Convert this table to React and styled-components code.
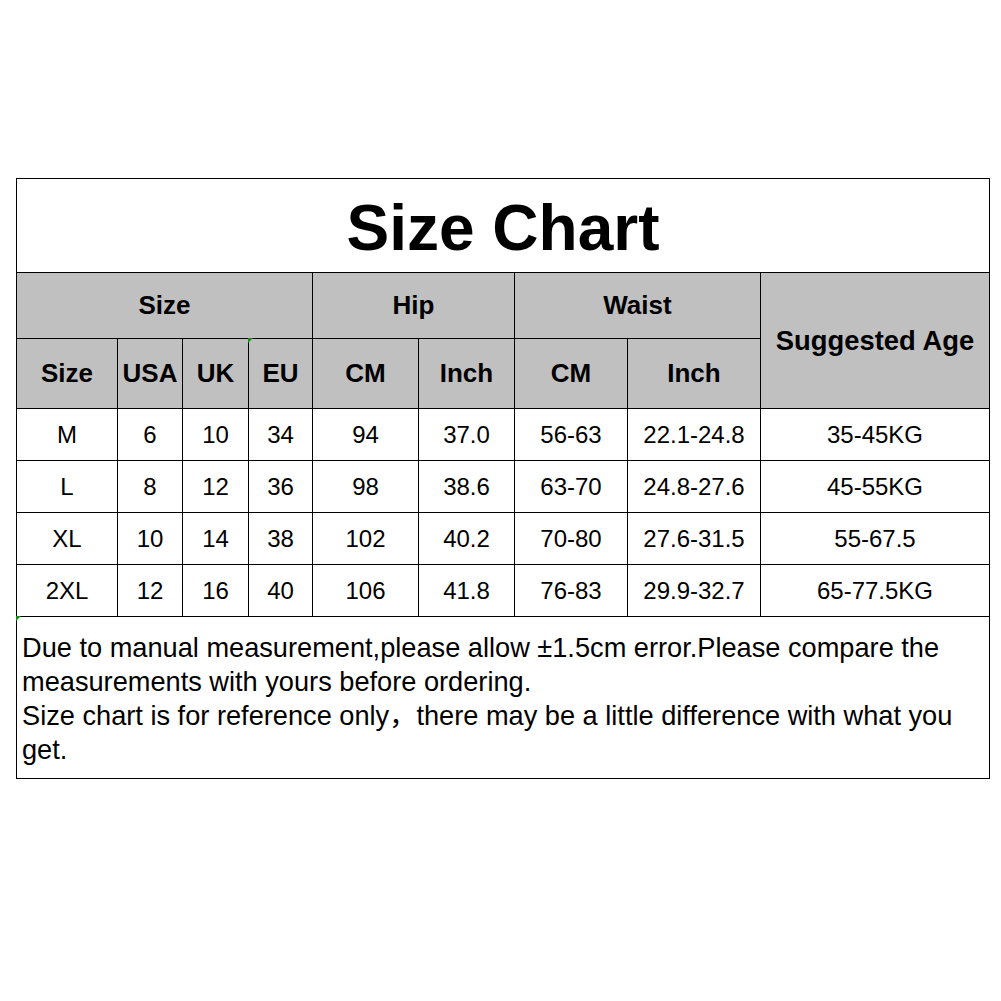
import React from 'react'
import styled, { createGlobalStyle, css } from 'styled-components'

const GlobalStyle = createGlobalStyle`
  body {
    margin: 0;
    background: #ffffff;
    font-family: "Liberation Sans", Arial, "Noto Sans CJK SC", sans-serif;
    color: #000000;
  }
`

const Page = styled.div`
  padding: 178px 0 0 16px;
`

const Chart = styled.div`
  width: 974px;
  display: grid;
  grid-template-columns: 100px 64px 65px 63px 105px 95px 112px 132px 228px;
  grid-template-rows: 93px 65px 69px 51px 51px 51px 51px 161px;
  gap: 1px;
  padding: 1px;
  box-sizing: border-box;
  background: #000000;
`

const Cell = styled.div`
  position: relative;
  display: flex;
  align-items: center;
  justify-content: center;
  background: ${p => (p.$head ? '#c0c0c0' : '#ffffff')};
  font-size: ${p => p.$size || (p.$head ? '26px' : '24px')};
  font-weight: ${p => (p.$head ? 700 : 400)};
  grid-column: ${p => (p.$span ? `span ${p.$span}` : 'auto')};
  grid-row: ${p => (p.$rows ? `span ${p.$rows}` : 'auto')};
  white-space: nowrap;
  ${p => p.$marked && css`
    &::before {
      content: '';
      position: absolute;
      left: -1px;
      top: -1px;
      width: 0;
      height: 0;
      border-top: 5px solid #1f8a1f;
      border-right: 5px solid transparent;
    }
  `}
`

const Title = styled(Cell)`
  grid-column: 1 / -1;
  font-size: 64px;
  font-weight: 700;
  padding-top: 4px;
`

const Note = styled.div`
  position: relative;
  grid-column: 1 / -1;
  background: #ffffff;
  padding: 14px 0 0 5px;
  font-size: 27.2px;
  line-height: 34px;
  &::before {
    content: '';
    position: absolute;
    left: -1px;
    top: -1px;
    border-top: 5px solid #1f8a1f;
    border-right: 5px solid transparent;
  }
`

const Line = styled.div`
  white-space: nowrap;
`

const rows = [
  ['M', '6', '10', '34', '94', '37.0', '56-63', '22.1-24.8', '35-45KG'],
  ['L', '8', '12', '36', '98', '38.6', '63-70', '24.8-27.6', '45-55KG'],
  ['XL', '10', '14', '38', '102', '40.2', '70-80', '27.6-31.5', '55-67.5'],
  ['2XL', '12', '16', '40', '106', '41.8', '76-83', '29.9-32.7', '65-77.5KG'],
]

const App = () => {
  return (
    <Page>
      <GlobalStyle />
      <Chart>
        <Title>Size Chart</Title>

        <Cell $head $span={4}>Size</Cell>
        <Cell $head $span={2}>Hip</Cell>
        <Cell $head $span={2}>Waist</Cell>
        <Cell $head $rows={2} $size="27.4px">Suggested Age</Cell>

        <Cell $head>Size</Cell>
        <Cell $head>USA</Cell>
        <Cell $head>UK</Cell>
        <Cell $head $marked>EU</Cell>
        <Cell $head>CM</Cell>
        <Cell $head>Inch</Cell>
        <Cell $head>CM</Cell>
        <Cell $head>Inch</Cell>

        {rows.map(row =>
          row.map((v, i) => <Cell key={row[0] + i}>{v}</Cell>)
        )}

        <Note>
          <Line>Due to manual measurement,please allow ±1.5cm error.Please compare the</Line>
          <Line>measurements with yours before ordering.</Line>
          <Line>Size chart is for reference only，there may be a little difference with what you</Line>
          <Line>get.</Line>
        </Note>
      </Chart>
    </Page>
  )
}

export default App
